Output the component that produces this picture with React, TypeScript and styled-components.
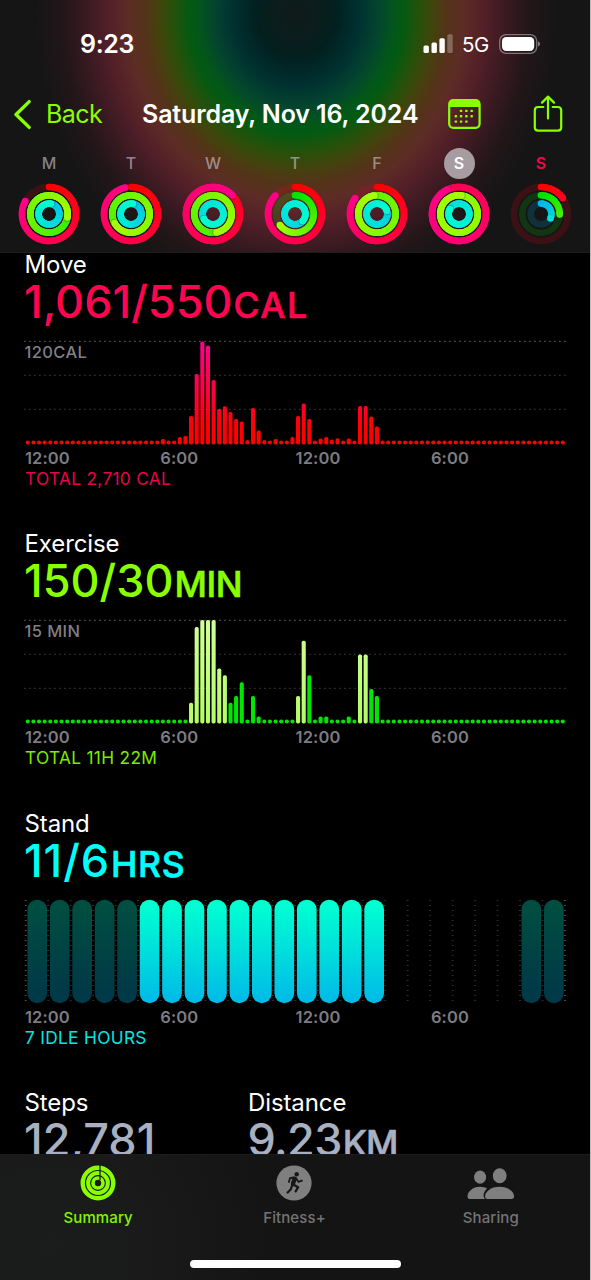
import React from "react";
import styled, { createGlobalStyle } from "styled-components";

const GlobalStyle = createGlobalStyle`
  body {
    margin: 0;
    background: #b9b9b9;
    font-family: Inter, "Liberation Sans", sans-serif;
  }
  * {
    box-sizing: border-box;
  }
`;

const Screen = styled.main`
  width: 590px;
  height: 1280px;
  display: flex;
  flex-direction: column;
  overflow: hidden;
  background: #000;
  color: #fff;
`;

const Header = styled.header`
  flex: none;
  height: 253px;
  border-bottom: 1px solid #1e1d1d;
  background: radial-gradient(
    ellipse 262px 294px at 296px 14px,
    #0f1b1a 0%,
    #0b1d1c 8%,
    #02201f 15%,
    #003030 24%,
    #04462e 32%,
    #03561a 37.5%,
    #045a12 41%,
    #28500a 47.5%,
    #43430d 52.5%,
    #543319 58%,
    #5d2c26 64%,
    #521f28 72%,
    #3b1a22 80%,
    #221619 89%,
    #151515 100%
  );
`;

const StatusBar = styled.div`
  height: 85px;
  padding: 3px 50px 0 80px;
  display: flex;
  align-items: center;
`;

const Clock = styled.span`
  flex: 1;
  font-size: 25px;
  font-weight: 600;
  letter-spacing: -0.35px;
`;

const Network = styled.span`
  margin: 0 10px 0 9px;
  font-size: 20.5px;
  font-weight: 400;
  letter-spacing: -0.4px;
`;

const NavBar = styled.div`
  height: 58px;
  padding: 0 27px 0 13px;
  display: flex;
  align-items: center;
  color: #8aff00;
`;

const BackButton = styled.button`
  width: 129px;
  padding: 0;
  border: 0;
  background: none;
  display: flex;
  align-items: center;
  gap: 14px;
  color: inherit;
  font-family: inherit;
  font-size: 25px;
  letter-spacing: -0.6px;
`;

const Title = styled.h1`
  width: 306px;
  margin: 0;
  color: #fff;
  font-size: 25px;
  font-weight: 600;
  letter-spacing: -0.13px;
  white-space: nowrap;
`;

const IconButton = styled.button`
  padding: 0;
  border: 0;
  background: none;
  color: inherit;
  display: flex;
  & + & {
    margin-left: auto;
  }
`;

const Week = styled.div`
  display: flex;
  justify-content: space-between;
  padding: 5px 18px 0;
`;

const Day = styled.div`
  width: 62px;
  display: flex;
  flex-direction: column;
  align-items: center;
  gap: 4px;
`;

const DayName = styled.span<{ $selected?: boolean; $today?: boolean }>`
  width: 31px;
  height: 31px;
  border-radius: 50%;
  font-size: 16px;
  line-height: 31px;
  text-align: center;
  font-weight: ${(props) => (props.$selected || props.$today ? 600 : 500)};
  color: ${(props) =>
    props.$selected ? "#fff" : props.$today ? "#f0094a" : "rgba(210,200,210,0.62)"};
  background: ${(props) => (props.$selected ? "#a79ca2" : "transparent")};
`;

const Content = styled.div`
  flex: 1;
  min-height: 0;
  overflow: hidden;
  margin-top: -1px;
`;

const Section = styled.section`
  height: 279.33px;
`;

const Label = styled.h2`
  margin: 0;
  padding-left: 24.5px;
  font-size: 24px;
  line-height: 26px;
  font-weight: 400;
  letter-spacing: -0.1px;
`;

const Value = styled.div<{ $color: string; $spacing?: number }>`
  height: 48px;
  padding-left: 24px;
  color: ${(props) => props.$color};
  font-size: 45px;
  line-height: 48px;
  font-weight: 500;
  letter-spacing: ${(props) => props.$spacing || 0}px;
  white-space: nowrap;
`;

const Unit = styled.span<{ $spacing?: number }>`
  margin-left: 1px;
  font-size: 35.5px;
  font-weight: 500;
  -webkit-text-stroke: 0.6px currentColor;
  letter-spacing: ${(props) => props.$spacing || 0}px;
`;

const Chart = styled.svg`
  display: block;
  width: 590px;
  height: 110px;
  margin-top: 12px;
`;

const Hours = styled.div`
  display: grid;
  grid-template-columns: repeat(4, 135.3px);
  padding-left: 25px;
  font-size: 16.5px;
  line-height: 21px;
  font-weight: 600;
  letter-spacing: 0.1px;
  color: #7d7c82;
`;

const Total = styled.div<{ $color: string }>`
  padding-left: 25px;
  font-size: 17.3px;
  line-height: 20px;
  letter-spacing: 0.32px;
  color: ${(props) => props.$color};
`;

const Stats = styled.div`
  display: grid;
  grid-template-columns: 223.5px 1fr;
`;

const TabBar = styled.nav`
  flex: none;
  height: 126px;
  border-top: 1px solid #1c1c1c;
  background: radial-gradient(circle at 50px 90px, #1b1d1d 0, #191919 110px, #141414 230px);
  display: flex;
  flex-direction: column;
  align-items: center;
`;

const Tabs = styled.div`
  width: 589px;
  align-self: flex-start;
  display: flex;
`;

const Tab = styled.div<{ $active?: boolean }>`
  flex: 1;
  height: 105px;
  padding-top: 10px;
  display: flex;
  flex-direction: column;
  align-items: center;
  gap: 6px;
  font-size: 15px;
  line-height: 22px;
  font-weight: 500;
  letter-spacing: 0.1px;
  color: ${(props) => (props.$active ? "#84f500" : "#747474")};
`;

const HomeIndicator = styled.div`
  width: 211px;
  height: 8px;
  border-radius: 4px;
  background: #fff;
`;

const RINGS = [
  { r: 27, from: [255, 0, 0], to: [255, 0, 138], track: "rgba(255,0,30,0.17)" },
  { r: 18.7, from: [0, 228, 0], to: [165, 255, 0], track: "rgba(0,255,0,0.14)" },
  { r: 10.4, from: [0, 184, 236], to: [0, 255, 208], track: "rgba(0,200,255,0.16)" },
];

const WEEK = [
  { name: "M", values: [0.83, 1.28, 1.03] },
  { name: "T", values: [0.965, 1.67, 1.03] },
  { name: "W", values: [1.13, 1.47, 1.67] },
  { name: "T", values: [0.87, 0.65, 1.37] },
  { name: "F", values: [0.85, 1.978, 1.2] },
  { name: "S", values: [1.93, 5.02, 1.83], selected: true },
  { name: "S", values: [0.15, 0.255, 0.32], today: true },
];

const point = (r: number, turn: number) => {
  const a = turn * Math.PI * 2;
  return [31 + r * Math.sin(a), 31 - r * Math.cos(a)];
};

const mix = (from: number[], to: number[], t: number) =>
  `rgb(${from.map((c, i) => Math.round(c + (to[i] - c) * t)).join(",")})`;

const Ring = ({ index, value }: { index: number; value: number }) => {
  const { r, from, to, track } = RINGS[index];
  const start = Math.max(0, value - 1);
  const length = value - start;
  const steps = Math.ceil(length * 72);
  const shade = (turn: number) => {
    const t = Math.min(1, turn / Math.max(value, 0.6));
    return mix(from, to, value > 1 ? Math.pow(t, 0.75) : t);
  };
  const [ex, ey] = point(r, value);
  const [sx, sy] = point(r, start);
  const [hx, hy] = point(r, value + 0.2 / r);
  return (
    <g fill="none" strokeWidth={6.6}>
      {value < 1 ? (
        <>
          <circle cx={31} cy={31} r={r} stroke={track} />
          <circle cx={sx} cy={sy} r={3.3} fill={shade(0)} />
        </>
      ) : (
        <circle cx={31} cy={31} r={r} stroke={shade(value * 0.75)} />
      )}
      {Array.from({ length: steps }, (_, i) => {
        const a = start + (length * i) / steps;
        const b = Math.min(value, start + (length * (i + 1.6)) / steps);
        const [x1, y1] = point(r, a);
        const [x2, y2] = point(r, b);
        return (
          <path
            key={i}
            d={`M${x1} ${y1}A${r} ${r} 0 0 1 ${x2} ${y2}`}
            stroke={shade(a)}
          />
        );
      })}
      {value > 0.9 && <circle cx={hx} cy={hy} r={3.2} fill="rgba(0,0,0,0.18)" />}
      <circle cx={ex} cy={ey} r={3.3} fill={shade(value)} />
    </g>
  );
};

const BASE = 106.5;
const STEP = 5.632;

type Bars = { [index: number]: number };

const MOVE: Bars = {
  24: 5.5, 27: 7.5, 28: 8.5, 29: 28.5, 30: 70.5, 31: 103, 32: 99, 33: 64.5,
  34: 35.7, 35: 38.3, 36: 32.5, 37: 25.5, 38: 23, 39: 4.5, 40: 36.5, 41: 14,
  42: 4.5, 44: 5.5, 47: 7.5, 48: 28.5, 49: 41, 50: 25.5, 52: 6, 53: 7.5,
  54: 5, 55: 6.3, 57: 6, 59: 38.5, 60: 38.5, 61: 28, 62: 18,
};

const EXERCISE: Bars = {
  29: 20.7, 30: 96.5, 31: 103.5, 32: 103.5, 33: 103.5, 34: 55, 35: 48.3,
  36: 20.7, 37: 27.5, 38: 41.3, 40: 27.5, 41: 6.9, 48: 27.5, 49: 82.8,
  50: 48.3, 52: 6.9, 53: 6.9, 57: 6.9, 59: 69, 60: 69, 61: 34.4, 62: 27.5,
};

// quarter hours spent in a workout
const WORKOUT = [29, 30, 31, 32, 33, 34, 35, 48, 49, 59, 60];

const BarChart = ({ id, bars, max, colors, highlight = [] }: {
  id: string;
  bars: Bars;
  max: string;
  colors: string[];
  highlight?: number[];
}) => (
  <Chart viewBox="0 0 590 110">
    <defs>
      <linearGradient id={id} gradientUnits="userSpaceOnUse" x1="0" y1="3" x2="0" y2={BASE}>
        <stop offset="0" stopColor={colors[0]} />
        <stop offset="0.85" stopColor={colors[1]} />
        <stop offset="1" stopColor={colors[1]} />
      </linearGradient>
      <linearGradient id={`${id}-workout`} gradientUnits="userSpaceOnUse" x1="0" y1="3" x2="0" y2={BASE}>
        <stop offset="0" stopColor="#d2ff96" />
        <stop offset="1" stopColor="#b4fc66" />
      </linearGradient>
    </defs>
    {[3.3, 37.3, 71.3].map((y, i) => (
      <line
        key={y}
        x1={24}
        x2={566.5}
        y1={y}
        y2={y}
        stroke={i === 0 ? "#484848" : "#2c2c2c"}
        strokeWidth={1.3}
        strokeDasharray="1.8 3.2"
      />
    ))}
    {Array.from({ length: 96 }, (_, i) => {
      const height = bars[i] || 4;
      return (
        <rect
          key={i}
          x={25.7 + STEP * i}
          y={BASE - height}
          width={4.1}
          height={height}
          rx={height > 5 ? 1.7 : 2}
          fill={`url(#${id}${highlight.includes(i) ? "-workout" : ""})`}
        />
      );
    })}
    <text x={24.5} y={20} fontSize={16.5} fontWeight={500} letterSpacing={0.4} fill="#807f85">
      {max}
    </text>
  </Chart>
);

const StandChart = () => (
  <Chart viewBox="0 0 590 110">
    <defs>
      <linearGradient id="stand" x1="0" y1="0" x2="0" y2="1">
        <stop offset="0.05" stopColor="#00ffd2" />
        <stop offset="1" stopColor="#00b9e8" />
      </linearGradient>
      <linearGradient id="idle" x1="0" y1="0" x2="0" y2="1">
        <stop offset="0.1" stopColor="#004d41" />
        <stop offset="0.9" stopColor="#003947" />
      </linearGradient>
    </defs>
    {Array.from({ length: 25 }, (_, i) => (
      <line
        key={i}
        x1={25.7 + 22.47 * i}
        x2={25.7 + 22.47 * i}
        y1={2.9}
        y2={104.5}
        stroke={i % 24 === 0 ? "#505050" : "#303030"}
        strokeWidth={1.8}
        strokeDasharray="1.2 3.8"
      />
    ))}
    {Array.from({ length: 24 }, (_, i) => {
      if (i > 15 && i < 22) return null;
      return (
        <rect
          key={i}
          x={27.4 + 22.46 * i}
          y={2.7}
          width={19.7}
          height={103.5}
          rx={9.85}
          fill={i > 4 && i < 16 ? "url(#stand)" : "url(#idle)"}
        />
      );
    })}
  </Chart>
);

const HourLabels = () => (
  <Hours>
    <span>12:00</span>
    <span>6:00</span>
    <span>12:00</span>
    <span>6:00</span>
  </Hours>
);

const SignalIcon = () => (
  <svg width="30" height="20" viewBox="0 0 30 20" fill="#fff">
    <rect x="0.5" y="11.5" width="5.4" height="7.5" rx="1.5" />
    <rect x="8.5" y="8.5" width="5.4" height="10.5" rx="1.5" />
    <rect x="16.4" y="4.2" width="5.4" height="14.8" rx="1.5" />
    <rect x="24.3" y="0.2" width="5.4" height="18.8" rx="1.5" opacity="0.28" />
  </svg>
);

const BatteryIcon = () => (
  <svg width="41" height="20" viewBox="0 0 41 20">
    <rect x="0.7" y="0.7" width="37" height="18.6" rx="6.3" fill="none" stroke="#fff" strokeOpacity="0.4" strokeWidth="1.3" />
    <rect x="3" y="3" width="32.2" height="14" rx="4.2" fill="#fff" />
    <path d="M39 7.6C41.7 8.4 41.7 11.6 39 12.4Z" fill="#fff" opacity="0.45" />
  </svg>
);

const ChevronIcon = () => (
  <svg width="19" height="31" viewBox="0 0 19 31" fill="none" stroke="currentColor" strokeWidth="3.4" strokeLinecap="round" strokeLinejoin="round">
    <path d="M16.2 2.6L3 15.5L16.2 28.4" />
  </svg>
);

const CalendarIcon = () => (
  <svg width="33" height="30" viewBox="0 0 33 30" fill="currentColor">
    <rect x="1.2" y="1.2" width="30.4" height="27.6" rx="4" fill="none" stroke="currentColor" strokeWidth="2.2" />
    <path d="M1 8V5Q1 1 5 1H28Q32 1 32 5V8Z" />
    {[[13, 11.9], [18.3, 11.9], [23.6, 11.9], [7.8, 17.2], [13, 17.2], [18.3, 17.2], [23.6, 17.2], [7.8, 22.5], [13, 22.5], [18.3, 22.5]].map(([x, y]) => (
      <rect key={`${x}-${y}`} x={x - 1.2} y={y - 1.1} width="2.5" height="2.3" rx="0.6" />
    ))}
  </svg>
);

const ShareIcon = () => (
  <svg width="30" height="38" viewBox="0 0 30 38" fill="none" stroke="currentColor" strokeWidth="2.2" strokeLinecap="round" strokeLinejoin="round">
    <path d="M10.3 12H5.2Q1.8 12 1.8 15.4V32.2Q1.8 35.6 5.2 35.6H24.8Q28.2 35.6 28.2 32.2V15.4Q28.2 12 24.8 12H19.7" />
    <path d="M15 23.5V2M9 7.6L15 1.6L21 7.6" />
  </svg>
);

const SummaryIcon = () => (
  <svg width="36" height="36" viewBox="0 0 36 36" fill="none" stroke="#8aff00">
    <circle cx="18" cy="18" r="15.3" strokeWidth="4.4" />
    <circle cx="18" cy="18" r="9.9" strokeWidth="4" />
    <circle cx="18" cy="18" r="5" strokeWidth="3.6" />
    <path d="M20 0V15" stroke="#191919" strokeWidth="1.3" />
  </svg>
);

const FitnessIcon = () => (
  <svg width="36" height="36" viewBox="0 0 36 36" fill="none" stroke="#161616" strokeLinecap="round" strokeLinejoin="round">
    <circle cx="18" cy="18" r="17.6" fill="#7f7f7f" stroke="none" />
    <circle cx="20.7" cy="9.2" r="2.2" fill="#161616" stroke="none" />
    <path d="M18.6 13.6L16.9 19" strokeWidth="4.2" />
    <path d="M17.6 12.5L14 13.2L12.9 17" strokeWidth="1.8" />
    <path d="M20 13.2L22.6 16.9L26 15.7" strokeWidth="1.8" />
    <path d="M18 20L22.2 22.2L19.6 26.3" strokeWidth="2.2" />
    <path d="M16 20.8L14.6 24.6L11.7 27.6" strokeWidth="2.2" />
  </svg>
);

const SharingIcon = () => (
  <svg width="48" height="36" viewBox="0.5 -0.8 48 36" fill="#7f7f7f">
    <ellipse cx="13.6" cy="11.4" rx="6" ry="6.6" />
    <ellipse cx="33.2" cy="10" rx="6.9" ry="7.5" />
    <path d="M18.5 33.2H3.2Q1 33.2 1 30.9C1 26 6 20.9 13.5 20.9C16.4 20.9 18.8 21.6 20.7 22.8C17.2 26 15.8 30.2 18.5 33.2Z" />
    <path d="M20.7 33.2Q18.5 33.2 18.5 30.8C18.5 26 24.2 20.9 33.1 20.9C42 20.9 47.6 26 47.6 30.8Q47.6 33.2 45.3 33.2Z" />
  </svg>
);

const App = () => {
  return (
    <>
      <GlobalStyle />
      <Screen>
        <Header>
          <StatusBar>
            <Clock>9:23</Clock>
            <SignalIcon />
            <Network>5G</Network>
            <BatteryIcon />
          </StatusBar>
          <NavBar>
            <BackButton>
              <ChevronIcon />
              Back
            </BackButton>
            <Title>Saturday, Nov 16, 2024</Title>
            <IconButton aria-label="Calendar">
              <CalendarIcon />
            </IconButton>
            <IconButton aria-label="Share">
              <ShareIcon />
            </IconButton>
          </NavBar>
          <Week>
            {WEEK.map((day, i) => (
              <Day key={i}>
                <DayName $selected={day.selected} $today={day.today}>
                  {day.name}
                </DayName>
                <svg width="62" height="62" viewBox="0 0 62 62">
                  {day.values.map((value, index) => (
                    <Ring key={index} index={index} value={value} />
                  ))}
                </svg>
              </Day>
            ))}
          </Week>
        </Header>
        <Content>
          <Section>
            <Label>Move</Label>
            <Value $color="#ff0550">
              1,061/550<Unit $spacing={1.5}>CAL</Unit>
            </Value>
            <BarChart id="move" bars={MOVE} max="120CAL" colors={["#fb0290", "#ff0000"]} />
            <HourLabels />
            <Total $color="#e5054a">TOTAL 2,710 CAL</Total>
          </Section>
          <Section>
            <Label>Exercise</Label>
            <Value $color="#8aff00">
              150/30<Unit $spacing={-0.4}>MIN</Unit>
            </Value>
            <BarChart
              id="exercise"
              bars={EXERCISE}
              max="15 MIN"
              colors={["#00e800", "#00e600"]}
              highlight={WORKOUT}
            />
            <HourLabels />
            <Total $color="#7eea00">TOTAL 11H 22M</Total>
          </Section>
          <Section>
            <Label>Stand</Label>
            <Value $color="#00fffb" $spacing={0.9}>
              11/6<Unit $spacing={0.7}>HRS</Unit>
            </Value>
            <StandChart />
            <HourLabels />
            <Total $color="#00e8e0">7 IDLE HOURS</Total>
          </Section>
          <Stats>
            <div>
              <Label>Steps</Label>
              <Value $color="#a9b0c0">12,781</Value>
            </div>
            <div>
              <Label>Distance</Label>
              <Value $color="#a9b0c0" $spacing={-0.6}>
                9.23<Unit $spacing={-1.2}>KM</Unit>
              </Value>
            </div>
          </Stats>
        </Content>
        <TabBar>
          <Tabs>
            <Tab $active>
              <SummaryIcon />
              Summary
            </Tab>
            <Tab>
              <FitnessIcon />
              Fitness+
            </Tab>
            <Tab>
              <SharingIcon />
              Sharing
            </Tab>
          </Tabs>
          <HomeIndicator />
        </TabBar>
      </Screen>
    </>
  );
};

export default App;
